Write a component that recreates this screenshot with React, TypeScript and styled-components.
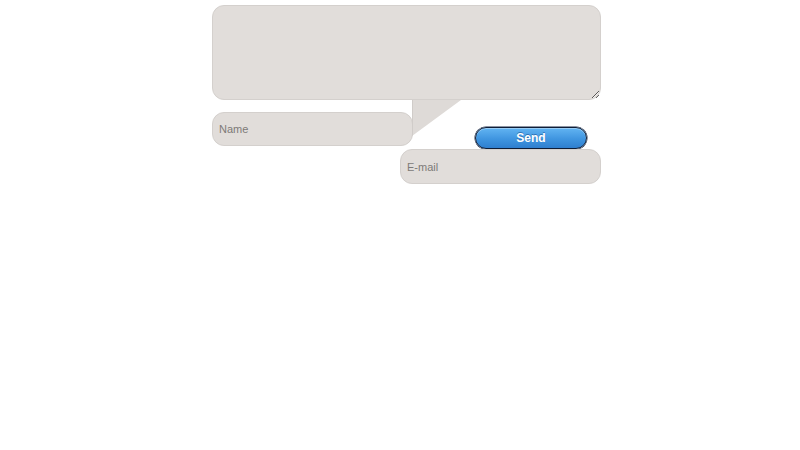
import React, { FC } from "react"
import styled, { createGlobalStyle } from "styled-components"

const GlobalStyle = createGlobalStyle`
	body {
		margin: 0;
		background: #ffffff;
		font-family: "Liberation Sans", Arial, sans-serif;
	}
`

const App: FC = () => {
	return (
		<>
			<GlobalStyle />
			<Container onSubmit={(e) => e.preventDefault()}>
				<MessageBox>
					<Message />
					<Tail />
				</MessageBox>
				<SenderRow>
					<Field placeholder="Name" width={201} height={34} />
					<SendButton type="submit">Send</SendButton>
				</SenderRow>
				<EmailRow>
					<Field placeholder="E-mail" width={201} height={35} />
				</EmailRow>
			</Container>
		</>
	)
}

export default App

const Container = styled.form`
	width: 389px;

	margin: 0 0 0 212px;
	padding-top: 5px;

	display: flex;
	flex-direction: column;
`

const MessageBox = styled.div`
	position: relative;
	height: 95px;
`

const Message = styled.textarea`
	box-sizing: border-box;
	width: 389px;
	height: 95px;

	margin: 0;
	padding: 8px;

	display: block;

	background: #e1ddda;
	border: 1px solid #d4d0cd;
	border-radius: 12px;

	font-family: "Liberation Sans", Arial, sans-serif;
	font-size: 11px;
	outline: none;
`

const Tail = styled.div`
	position: absolute;
	left: 200px;
	top: 95px;

	width: 49px;
	height: 36px;

	background: #dedad7;
	clip-path: polygon(0 0, 100% 0, 0 100%);
	z-index: 2;

	&::before {
		content: "";
		position: absolute;
		left: 0;
		top: 0;
		width: 1px;
		height: 100%;
		background: #d0ccc9;
	}
`

const SenderRow = styled.div`
	margin-top: 12px;
	height: 37px;

	display: flex;
	align-items: flex-start;
	justify-content: space-between;
`

const EmailRow = styled.div`
	display: flex;
	justify-content: flex-end;
`

const Field = styled.input<{ width: number; height: number }>`
	box-sizing: border-box;
	width: ${(p) => p.width}px;
	height: ${(p) => p.height}px;

	margin: 0;
	padding: 0 6px;

	background: #e1ddda;
	border: 1px solid #d4d0cd;
	border-radius: 12px;

	font-family: "Liberation Sans", Arial, sans-serif;
	font-size: 11px;
	color: #555;
	outline: none;

	&::placeholder {
		color: #7d7a78;
	}
`

const SendButton = styled.button`
	box-sizing: border-box;
	width: 112px;
	height: 22px;

	margin: 15px 14px 0 0;
	padding: 0;

	background: linear-gradient(to bottom, #62b4f2 0%, #3f95e0 55%, #2f7fcf 100%);
	border: 1px solid #0f1d36;
	border-radius: 11px;
	box-shadow: inset 0 1px 0 rgba(255, 255, 255, 0.35), 0 0 0 0.5px #1b2b48;

	color: #ffffff;
	font-family: "Liberation Sans", Arial, sans-serif;
	font-size: 12px;
	font-weight: bold;
	text-shadow: 0 -1px 0 rgba(0, 40, 100, 0.4);

	cursor: pointer;
`
